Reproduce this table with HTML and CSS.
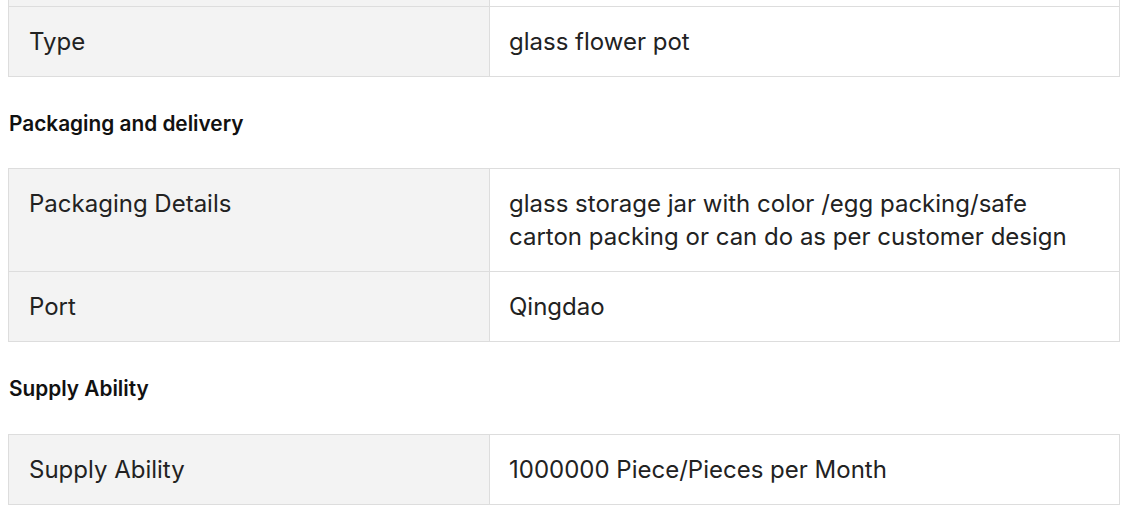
FILE: index.html
```html
<!DOCTYPE html>
<html>
<head>
<meta charset="utf-8">
<link rel="stylesheet" href="styles.css">
</head>
<body>
<div class="page">
  <table class="spec">
    <tr class="stub"><td class="key"></td><td class="val"></td></tr>
    <tr><td class="key">Type</td><td class="val">glass flower pot</td></tr>
  </table>
  <h3 class="heading">Packaging and delivery</h3>
  <table class="spec">
    <tr><td class="key">Packaging Details</td><td class="val">glass storage jar with color /egg packing/safe<br>carton packing or can do as per customer design</td></tr>
    <tr><td class="key">Port</td><td class="val">Qingdao</td></tr>
  </table>
  <h3 class="heading heading-gap">Supply Ability</h3>
  <table class="spec">
    <tr><td class="key">Supply Ability</td><td class="val">1000000 Piece/Pieces per Month</td></tr>
  </table>
</div>
</body>
</html>
```
FILE: styles.css
```css
html, body {
  margin: 0;
  padding: 0;
  background: #fff;
}
body {
  font-family: Inter, "Noto Sans", sans-serif;
  color: #222;
}
.page {
  padding: 0 11px 0 8px;
}
.spec {
  width: 100%;
  border-collapse: collapse;
  table-layout: fixed;
}
.spec td {
  box-sizing: border-box;
  border: 1px solid #dddddd;
  padding: 18px 20px 18px 19px;
  font-size: 24px;
  line-height: 33px;
  vertical-align: top;
}
.spec .key {
  width: 481px;
  background: #f3f3f3;
  padding-left: 20px;
}
.spec .val {
  background: #fff;
}
.spec .stub td {
  padding: 0;
  height: 6px;
  line-height: 0;
  border-top: none;
}
.heading {
  margin: 0;
  padding: 33px 0 31px 1px;
  font-size: 20.8px;
  line-height: 27px;
  font-weight: 600;
  color: #111;
}
.heading-gap {
  padding-bottom: 32px;
}
```
